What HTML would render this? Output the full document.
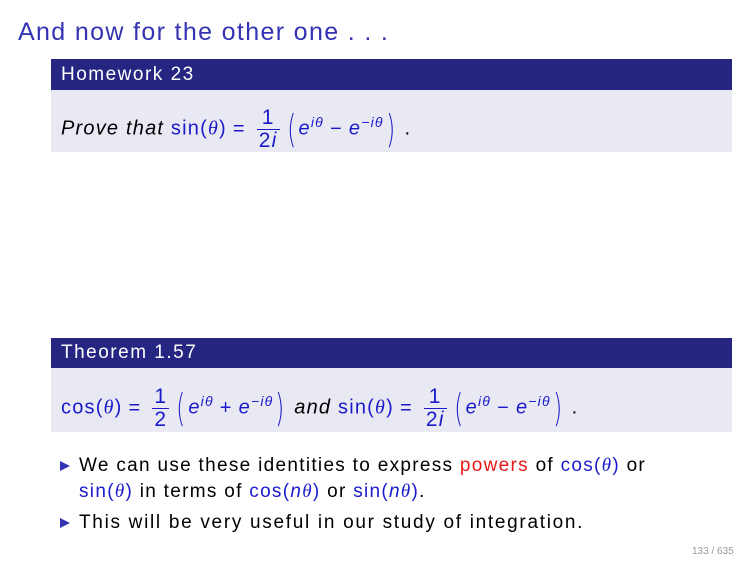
<!DOCTYPE html>
<html><head><meta charset="utf-8"><style>
body{margin:0;width:756px;height:567px;background:#fff;position:relative;overflow:hidden;font-family:"Liberation Sans",sans-serif;}
.a{position:absolute;white-space:nowrap}
.t{left:18px;top:18px;font-size:25px;color:#3333b3;letter-spacing:1.35px}
.hd{position:absolute;left:51px;width:681px;background:#262682;color:#fff;font-size:19px;letter-spacing:1.5px}
.bd{position:absolute;left:51px;width:681px;background:#e9e9f3;}
.m{color:#1a1acc;font-size:20px;letter-spacing:1.2px}
.it{font-style:italic;color:#000}
.fr{display:inline-block;vertical-align:middle;text-align:center;margin:0 5px;line-height:22px;font-size:21px}
.fr span{display:block;padding:0 2px}
.fr .n{border-bottom:1px solid #1a1acc}
.p{font-size:38px;font-weight:300;vertical-align:middle;display:inline-block;transform:scaleX(.6);font-family:"DejaVu Sans",sans-serif;margin:0 -1px}
sup{font-size:14px;font-style:italic}
.e{font-style:italic}
.o{margin:0 6px}
.th{font-family:"Liberation Serif",serif;font-style:italic}
.bl{position:absolute;left:79px;font-size:19px;color:#000;letter-spacing:1.3px}
.bl .tri{position:absolute;left:-19px;top:6px;width:0;height:0;border-left:10px solid #3333b3;border-top:5px solid transparent;border-bottom:5px solid transparent}
.b{color:#1a1acc}
</style></head><body>
<div class="a t">And now for the other one . . .</div>
<div class="hd" style="top:59px;height:31px;line-height:31px"><span style="padding-left:10px">Homework 23</span></div>
<div class="bd" style="top:90px;height:62px"></div>
<div class="a m" style="left:61px;top:96px;height:52px;line-height:52px"><span class="it">Prove that </span>sin(<span class="th">θ</span>)<span class="o">=</span><span class="fr"><span class="n">1</span><span>2<i>i</i></span></span><span class="p">(</span><span class="e">e</span><sup>iθ</sup><span class="o">−</span><span class="e">e</span><sup>−iθ</sup><span class="p">)</span> <span style="color:#000">.</span></div>

<div class="hd" style="top:338px;height:30px;line-height:30px"><span style="padding-left:10px">Theorem 1.57</span></div>
<div class="bd" style="top:368px;height:64px"></div>
<div class="a m" style="left:61px;top:375px;height:52px;line-height:52px">cos(<span class="th">θ</span>)<span class="o">=</span><span class="fr"><span class="n">1</span><span>2</span></span><span class="p">(</span><span class="e">e</span><sup>iθ</sup><span class="o">+</span><span class="e">e</span><sup>−iθ</sup><span class="p">)</span> <span class="it">and</span> sin(<span class="th">θ</span>)<span class="o">=</span><span class="fr"><span class="n">1</span><span>2<i>i</i></span></span><span class="p">(</span><span class="e">e</span><sup>iθ</sup><span class="o">−</span><span class="e">e</span><sup>−iθ</sup><span class="p">)</span> <span style="color:#000">.</span></div>

<div class="bl" style="top:455px"><span class="tri"></span>We can use these identities to express <span style="color:#e61a1a">powers</span> of <span class="b">cos(<span class="th">θ</span>)</span> or</div>
<div class="bl" style="top:481px"><span class="b">sin(<span class="th">θ</span>)</span> in terms of <span class="b">cos(<i>n</i><span class="th">θ</span>)</span> or <span class="b">sin(<i>n</i><span class="th">θ</span>)</span>.</div>
<div class="bl" style="top:512px;letter-spacing:1.7px"><span class="tri"></span>This will be very useful in our study of integration.</div>
<div class="a" style="left:692px;top:546px;font-size:10px;color:#999">133 / 635</div>
</body></html>
